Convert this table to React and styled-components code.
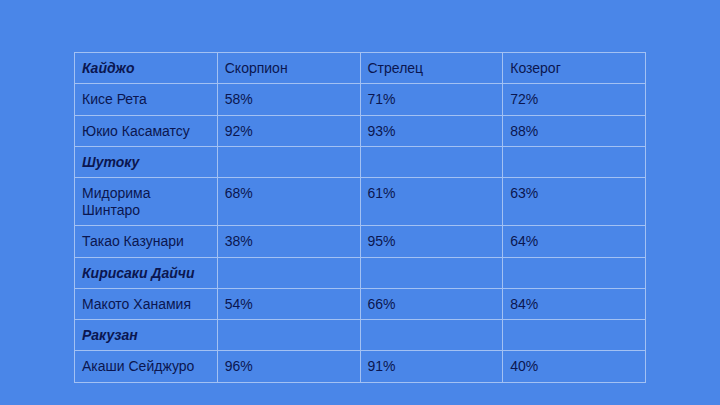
import React from 'react'
import styled, { createGlobalStyle } from 'styled-components'

const GlobalStyle = createGlobalStyle`
  html, body {
    margin: 0;
    padding: 0;
    background: #4a86e8;
  }
`

const Page = styled.div`
  width: 720px;
  height: 405px;
  box-sizing: border-box;
  padding: 52px 0 0 74px;
  background: #4a86e8;
  font-family: 'Liberation Sans', Arial, sans-serif;
`

const Table = styled.table`
  width: 572px;
  border-collapse: collapse;
  table-layout: fixed;
`

const Cell = styled.td`
  border: 1px solid #a3c1f3;
  padding: 7px 7px 6.25px;
  font-size: 14px;
  line-height: 17px;
  color: #0b1650;
  vertical-align: top;
  font-weight: ${(p) => (p.$group ? 'bold' : 'normal')};
  font-style: ${(p) => (p.$group ? 'italic' : 'normal')};
`

const rows = [
  { name: 'Кайджо', group: true, values: ['Скорпион', 'Стрелец', 'Козерог'] },
  { name: 'Кисе Рета', values: ['58%', '71%', '72%'] },
  { name: 'Юкио Касаматсу', values: ['92%', '93%', '88%'] },
  { name: 'Шутоку', group: true, values: ['', '', ''] },
  { name: 'Мидорима Шинтаро', values: ['68%', '61%', '63%'] },
  { name: 'Такао Казунари', values: ['38%', '95%', '64%'] },
  { name: 'Кирисаки Дайчи', group: true, values: ['', '', ''] },
  { name: 'Макото Ханамия', values: ['54%', '66%', '84%'] },
  { name: 'Ракузан', group: true, values: ['', '', ''] },
  { name: 'Акаши Сейджуро', values: ['96%', '91%', '40%'] },
]

const App = () => {
  return (
    <Page>
      <GlobalStyle />
      <Table>
        <tbody>
          {rows.map((row) => (
            <tr key={row.name}>
              <Cell $group={row.group}>{row.name}</Cell>
              {row.values.map((v, i) => (
                <Cell key={i}>{v}</Cell>
              ))}
            </tr>
          ))}
        </tbody>
      </Table>
    </Page>
  )
}

export default App
